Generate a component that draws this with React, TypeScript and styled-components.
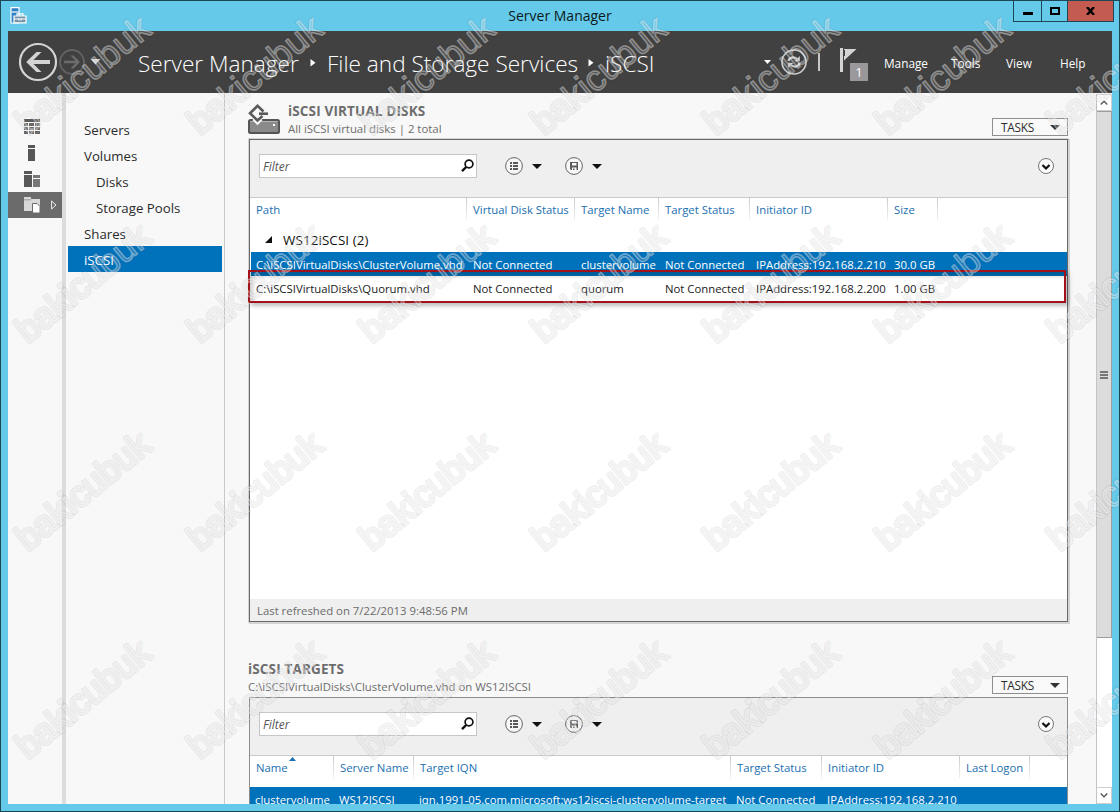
import React from "react";
import styled, { createGlobalStyle, css } from "styled-components";

const GlobalStyle = createGlobalStyle`
  * { box-sizing: border-box; }
  html, body { margin: 0; padding: 0; }
  body {
    width: 1120px;
    height: 812px;
    overflow: hidden;
    font-family: "Open Sans", "Noto Sans", sans-serif;
    font-size: 11.35px;
    color: #1e1e1e;
  }
  svg { display: block; flex: none; }
`;

const Window = styled.div`
  position: relative;
  width: 1120px;
  height: 812px;
  padding: 0 7px 7px;
  border: 1px solid #1d4656;
  background: #65c9ea;
  display: flex;
  flex-direction: column;
  overflow: hidden;
`;

const TitleBar = styled.header`
  height: 30px;
  flex: none;
  display: grid;
  grid-template-columns: 120px 1fr 120px;
  align-items: start;
`;

const AppIcon = styled.div`
  padding: 6px 0 0 1px;
`;

const WindowTitle = styled.div`
  text-align: center;
  font-size: 14px;
  line-height: 29px;
  color: #0c1a20;
`;

const CaptionButtons = styled.div`
  display: flex;
  justify-content: flex-end;
  margin: -1px -2px 0 0;
`;

const CaptionButton = styled.button<{ $width: number; $close?: boolean }>`
  width: ${(p) => p.$width}px;
  height: 22px;
  margin: 0 0 0 -1px;
  padding: 0;
  border: 1px solid #1d4656;
  background: ${(p) => (p.$close ? "#c45b50" : "transparent")};
  display: flex;
  align-items: center;
  justify-content: center;
`;

const Banner = styled.div`
  height: 62px;
  flex: none;
  background: #414141;
  color: #fff;
  display: flex;
  align-items: center;
  padding-left: 10px;
`;

const NavButtons = styled.div`
  width: 120px;
  display: flex;
  align-items: center;
`;

const Breadcrumb = styled.div`
  width: 626px;
  display: flex;
  align-items: center;
  font-size: 22.6px;
  font-weight: 300;
  line-height: 30px;
  white-space: nowrap;
  padding-top: 3px;
`;

const Crumb = styled.span<{ $width: number }>`
  width: ${(p) => p.$width}px;
`;

const BannerTools = styled.div`
  display: flex;
  align-items: center;
`;

const Divider = styled.i`
  width: 2px;
  height: 18px;
  margin: 0 20px 0 11px;
  background: #c6c6c6;
`;

const FlagButton = styled.div`
  position: relative;
  width: 44px;
  height: 36px;
  padding-top: 4px;
`;

const Badge = styled.span`
  position: absolute;
  left: 10px;
  top: 19px;
  width: 18px;
  height: 18px;
  background: #9a989b;
  font-size: 13px;
  line-height: 18px;
  text-align: center;
`;

const MenuItem = styled.span<{ $width: number }>`
  width: ${(p) => p.$width}px;
  font-size: 11.8px;
  line-height: 20px;
  padding-top: 1px;
`;

const Body = styled.div`
  flex: 1;
  min-height: 0;
  display: flex;
  background: #f8f8f8;
`;

const Rail = styled.nav`
  width: 58px;
  padding-top: 21px;
  border-right: 4px solid #dcdcdc;
`;

const RailItem = styled.div<{ $active?: boolean }>`
  height: 26px;
  display: flex;
  align-items: center;
  gap: 11px;
  padding-left: 16px;
  background: ${(p) => (p.$active ? "#6b6b6b" : "transparent")};
`;

const SideNav = styled.nav`
  width: 159px;
  padding: 23px 2px 0;
  border-right: 1px solid #c9c9c9;
`;

const SideItem = styled.div<{ $nested?: boolean; $active?: boolean }>`
  height: 26px;
  padding-left: ${(p) => (p.$nested ? 28 : 16)}px;
  line-height: 28px;
  font-size: 13.25px;
  color: ${(p) => (p.$active ? "#fff" : "#2b2b2b")};
  background: ${(p) => (p.$active ? "#0072bc" : "transparent")};
`;

const Content = styled.main`
  width: 871px;
  padding: 8px 0 0 23px;
  overflow: hidden;
`;

const SectionHead = styled.div<{ $gap?: number }>`
  width: 820px;
  height: 38px;
  margin-top: ${(p) => p.$gap || 0}px;
  display: flex;
  align-items: flex-start;
`;

const SectionIcon = styled.div`
  width: 40px;
  padding-top: 3px;
`;

const SectionTexts = styled.div`
  flex: 1;
  padding-top: 1px;
  color: #6d6d6d;
`;

const SectionTitle = styled.div`
  font-size: 13.5px;
  font-weight: 700;
  line-height: 18px;
  letter-spacing: 0.15px;
`;

const SectionSub = styled.div`
  font-size: 11.4px;
  line-height: 17px;
`;

const TasksButton = styled.button`
  width: 76px;
  height: 18px;
  margin: 17px 0 0;
  padding: 0 7px 0 8px;
  border: 1px solid #8f8f8f;
  background: #f9f9f9;
  display: flex;
  align-items: center;
  justify-content: space-between;
  font: 11.8px "Open Sans", sans-serif;
  letter-spacing: -0.2px;
  color: #2b2b2b;
`;

const Panel = styled.section<{ $height: number; $soft?: boolean }>`
  width: 819px;
  height: ${(p) => p.$height}px;
  margin-left: 1px;
  border: 1px solid ${(p) => (p.$soft ? "#8c8c8c" : "#696969")};
  background: #fff;
  display: flex;
  flex-direction: column;
  ${(p) =>
    !p.$soft &&
    css`
      box-shadow: 0 0 0 1px #d4d4d4, 1px 1px 0 1px #d4d4d4;
    `}
`;

const Toolbar = styled.div`
  height: 57px;
  flex: none;
  display: flex;
  align-items: flex-start;
  padding: 14px 13px 0 9px;
  background: #efefef;
`;

const FilterBox = styled.div`
  width: 218px;
  height: 24px;
  display: flex;
  align-items: center;
  justify-content: space-between;
  padding: 0 2px 0 3px;
  border: 1px solid #c6c6c6;
  background: #fff;
  font-style: italic;
  font-size: 12px;
  color: #555;
`;

const ToolButton = styled.div<{ $gap: number }>`
  height: 24px;
  width: 37px;
  margin-left: ${(p) => p.$gap}px;
  display: flex;
  align-items: center;
  justify-content: space-between;
`;

const ExpandButton = styled.div`
  height: 24px;
  margin-left: auto;
  display: flex;
  align-items: center;
`;

const HeadRow = styled.div<{ $height: number }>`
  height: ${(p) => p.$height}px;
  flex: none;
  display: flex;
  border-top: 1px solid #c9c9c9;
`;

const HeadCell = styled.div<{ $width: number }>`
  width: ${(p) => p.$width}px;
  height: 22px;
  padding: 0 0 0 6px;
  line-height: 23px;
  color: #1b6fb0;
  white-space: nowrap;
  border-right: 1px solid;
  border-image: linear-gradient(#c9c9c9, #f3f3f3) 1;
`;

const SortMark = styled.svg`
  position: absolute;
  left: 288px;
  top: 756px;
`;

const GroupRow = styled.div`
  height: 28px;
  display: flex;
  align-items: center;
  gap: 11px;
  padding: 3px 0 0 15px;
  font-size: 13.4px;
  letter-spacing: 0.1px;
  color: #111;
`;

const Row = styled.div<{ $active?: boolean; $shift?: number }>`
  height: 24px;
  flex: none;
  display: flex;
  align-items: center;
  margin-left: ${(p) => p.$shift || 0}px;
  line-height: 24px;
  color: ${(p) => (p.$active ? "#fff" : "#1a1a1a")};
  background: ${(p) => (p.$active ? "#0072bc" : "transparent")};
`;

const Cell = styled.div<{ $width: number }>`
  width: ${(p) => p.$width}px;
  padding: 2px 0 0 5px;
  white-space: nowrap;
`;

const PanelFooter = styled.div`
  height: 22px;
  margin-top: auto;
  padding-left: 7px;
  line-height: 23px;
  background: #efefef;
  color: #6b6b6b;
`;

const Highlight = styled.div`
  position: absolute;
  left: 247px;
  top: 269px;
  width: 818px;
  height: 33px;
  border: 2px solid #a3121a;
  box-shadow: 3px 3px 4px rgba(0, 0, 0, 0.25), inset 3px 4px 4px rgba(0, 0, 0, 0.2);
`;

const ScrollBar = styled.div`
  width: 16px;
  margin-top: 1px;
  border-left: 1px solid #c4c4c4;
  background: #fff;
  display: flex;
  flex-direction: column;
`;

const ScrollArrow = styled.div<{ $bottom?: boolean }>`
  height: 17px;
  flex: none;
  display: flex;
  align-items: center;
  justify-content: center;
  border: 1px solid #cfcfcf;
  border-left: 0;
  margin-top: ${(p) => (p.$bottom ? "auto" : 0)};
`;

const ScrollThumb = styled.div`
  height: 527px;
  display: flex;
  align-items: center;
  justify-content: center;
  border: 1px solid #9d9d9d;
  border-left: 0;
  background: #dcdcdc;
`;

const WatermarkLayer = styled.svg`
  position: absolute;
  left: -1px;
  top: -1px;
  pointer-events: none;
  font-family: "Liberation Sans", Arial, sans-serif;
  font-size: 36px;
`;

const Caret = ({ color = "#111" }: { color?: string }) => (
  <svg width="10" height="5" viewBox="0 0 10 5">
    <path d="M0 0H10L5 5Z" fill={color} />
  </svg>
);

const CrumbArrow = () => (
  <svg width="28" height="10" viewBox="0 0 28 10">
    <path d="M11.500 0L16.500 3.700L11.500 7.500Z" fill="#fff" />
  </svg>
);

const ServerManagerIcon = () => (
  <svg width="18" height="17" viewBox="0 0 18 17">
    <path d="M2 .7H10V16H2Z" fill="#2f7fc4" stroke="#fff" strokeWidth="1.200" />
    <path d="M2.500 5H9.500" stroke="#fff" strokeWidth="1.200" />
    <path d="M5 9H17V15.800H5Z" fill="#7393a8" stroke="#fff" strokeWidth="1.200" />
    <path d="M8 9V6.800H14V9M5 12H9.500M12.500 12H17M10 11V13.500M12 11V13.500" fill="none" stroke="#fff" strokeWidth="1.200" />
  </svg>
);

const BackIcon = () => (
  <svg width="40" height="40" viewBox="0 0 40 40">
    <circle cx="20" cy="20" r="18" fill="none" stroke="#d4d4d4" strokeWidth="2.200" />
    <path d="M32 18H15.500L23.500 10H18.500L8.200 20L18.500 30H23.500L15.500 22H32Z" fill="#d4d4d4" />
  </svg>
);

const ForwardIcon = () => (
  <svg width="28" height="28" viewBox="0 0 28 28">
    <circle cx="14" cy="14" r="12" fill="none" stroke="#636363" strokeWidth="1.800" />
    <path d="M6 12.700H17.500L12.500 7.500H15.500L22 14L15.500 20.500H12.500L17.500 15.300H6Z" fill="#6c6c6c" />
  </svg>
);

const RefreshIcon = () => (
  <svg width="26" height="26" viewBox="0 0 26 26" fill="none" stroke="#d2d2d2">
    <circle cx="13" cy="13" r="12" strokeWidth="1.600" />
    <path d="M7.500 12C8 8.800 12.500 7 16 10M18.500 14C18 17.200 13.500 19 10 16" strokeWidth="2.200" />
    <path d="M18.800 7V12.200H13.500ZM7.200 19V13.800H12.500Z" fill="#d2d2d2" stroke="none" />
  </svg>
);

const FlagIcon = () => (
  <svg width="17" height="24" viewBox="0 0 17 24">
    <path d="M0 0H3V24H0Z" fill="#d4d4d4" />
    <path d="M4 1H16.500L4 12.500Z" fill="#d4d4d4" />
    <path d="M4.500 2V8" stroke="#414141" strokeWidth="1" />
  </svg>
);

const DashboardIcon = () => (
  <svg width="16" height="16" viewBox="0 0 16 16" fill="#6a6a6a">
    <path d="M0 0H16V3H0Z" fill="#5c5c5c" />
    <path d="M0 4H4V7H0ZM5 4H10V7H5ZM11 4H16V7H11ZM0 8H4V11H0ZM5 8H10V11H5ZM11 8H16V11H11ZM0 12H4V15H0ZM5 12H10V15H5ZM11 12H16V15H11Z" />
  </svg>
);

const LocalServerIcon = () => (
  <svg width="16" height="16" viewBox="0 0 16 16" fill="#575757">
    <path d="M4 0H11V3H4ZM4 4H11V16H4Z" />
  </svg>
);

const AllServersIcon = () => (
  <svg width="16" height="16" viewBox="0 0 16 16">
    <path d="M0 0H8V3H0ZM0 4H8V16H0Z" fill="#575757" />
    <path d="M9 4H16V7H9ZM9 8H16V16H9Z" fill="#777" />
  </svg>
);

const FilesIcon = () => (
  <svg width="16" height="16" viewBox="0 0 16 16">
    <path d="M0 0H7V2H16V14H0Z" fill="#d8d8d8" />
    <path d="M0 2.800H7" stroke="#9a9a9a" />
    <path d="M8.500 6.500H13L16 9.500V16H8.500Z" fill="#fff" stroke="#6b6b6b" />
  </svg>
);

const VirtualDiskIcon = () => (
  <svg width="32" height="31" viewBox="0 0 32 31">
    <rect x="1" y="16" width="30" height="13" rx="1.500" fill="#8a8a8a" stroke="#555" strokeWidth="2" />
    <path d="M2.500 17.500H29.500" stroke="#b5b5b5" />
    <path d="M25 20H27V22H25Z" fill="#fff" />
    <path d="M6 14.500L9.500 18L13 14.500" fill="none" stroke="#f8f8f8" strokeWidth="4.500" />
    <path d="M15.500 7.500L9.500 1.800L2 9.300L9.500 16.500L14.500 12" fill="none" stroke="#5a5a5a" strokeWidth="2.600" />
    <path d="M11 9.700H20" stroke="#5a5a5a" strokeWidth="2.600" />
  </svg>
);

const SearchIcon = () => (
  <svg width="13" height="14" viewBox="0 0 13 14" fill="none" stroke="#111">
    <circle cx="8" cy="5" r="3.900" strokeWidth="1.700" />
    <path d="M5.200 8L1 12.200" strokeWidth="2.400" />
  </svg>
);

const ListIcon = () => (
  <svg width="18" height="18" viewBox="0 0 18 18">
    <circle cx="9" cy="9" r="8.400" fill="#f7f7f7" stroke="#666" />
    <path d="M5 5H7V7H5ZM8 5H13V7H8ZM5 8H7V10H5ZM8 8H13V10H8ZM5 11H7V13H5ZM8 11H13V13H8Z" fill="#5a5a5a" />
  </svg>
);

const SaveIcon = () => (
  <svg width="18" height="18" viewBox="0 0 18 18">
    <circle cx="9" cy="9" r="8.400" fill="#f7f7f7" stroke="#666" />
    <path d="M5 5H13V13H11.500V10.500H7V13H6L5 12ZM7 6V8.500H11.500V6Z" fill="#5a5a5a" fillRule="evenodd" />
    <path d="M8 11.500H9.500V13H8Z" fill="#5a5a5a" />
  </svg>
);

const ExpandIcon = () => (
  <svg width="16" height="16" viewBox="0 0 16 16">
    <circle cx="8" cy="8" r="7.500" fill="#fbfbfb" stroke="#777" />
    <path d="M4.500 7L8 10.500L11.500 7" fill="none" stroke="#111" strokeWidth="2.200" />
  </svg>
);

const FilterToolbar = () => (
  <Toolbar>
    <FilterBox>
      Filter
      <SearchIcon />
    </FilterBox>
    <ToolButton $gap={28}>
      <ListIcon />
      <Caret />
    </ToolButton>
    <ToolButton $gap={23}>
      <SaveIcon />
      <Caret />
    </ToolButton>
    <ExpandButton>
      <ExpandIcon />
    </ExpandButton>
  </Toolbar>
);

const diskColumns = [
  { label: "Path", width: 217 },
  { label: "Virtual Disk Status", width: 108 },
  { label: "Target Name", width: 84 },
  { label: "Target Status", width: 91 },
  { label: "Initiator ID", width: 138 },
  { label: "Size", width: 50 },
];

const diskRows = [
  ["C:\\iSCSIVirtualDisks\\ClusterVolume.vhd", "Not Connected", "clustervolume", "Not Connected", "IPAddress:192.168.2.210", "30.0 GB"],
  ["C:\\iSCSIVirtualDisks\\Quorum.vhd", "Not Connected", "quorum", "Not Connected", "IPAddress:192.168.2.200", "1.00 GB"],
];

const targetColumns = [
  { label: "Name", width: 84 },
  { label: "Server Name", width: 80 },
  { label: "Target IQN", width: 317 },
  { label: "Target Status", width: 91 },
  { label: "Initiator ID", width: 138 },
  { label: "Last Logon", width: 70 },
];

const targetRow = [
  "clustervolume",
  "WS12ISCSI",
  "iqn.1991-05.com.microsoft:ws12iscsi-clustervolume-target",
  "Not Connected",
  "IPAddress:192.168.2.210",
  "",
];

const sideItems = [
  { label: "Servers" },
  { label: "Volumes" },
  { label: "Disks", nested: true },
  { label: "Storage Pools", nested: true },
  { label: "Shares" },
  { label: "iSCSI", active: true },
];

const Watermark = () => {
  const marks: React.ReactNode[] = [];
  for (let r = 0; r < 4; r++) {
    for (let c = 0; c < 7; c++) {
      marks.push(
        <text key={`${r}-${c}`} transform={`translate(${28 + c * 172} ${136 + r * 208}) rotate(-39.5)`}>
          bakicubuk
        </text>
      );
    }
  }
  return (
    <WatermarkLayer width="1120" height="812" viewBox="0 0 1120 812" strokeLinejoin="round">
      <g fill="none" stroke="#000" strokeOpacity="0.07" strokeWidth="3.800">
        {marks}
      </g>
      <g fill="#fff" fillOpacity="0.13" stroke="#fff" strokeOpacity="0.38" strokeWidth="1.600">
        {marks}
      </g>
    </WatermarkLayer>
  );
};

export default function App() {
  return (
    <>
      <GlobalStyle />
      <Window>
        <TitleBar>
          <AppIcon>
            <ServerManagerIcon />
          </AppIcon>
          <WindowTitle>Server Manager</WindowTitle>
          <CaptionButtons>
            <CaptionButton $width={29}>
              <svg width="10" height="10" viewBox="0 0 10 10">
                <path d="M0 6H10V9H0Z" fill="#000" />
              </svg>
            </CaptionButton>
            <CaptionButton $width={27}>
              <svg width="10" height="8" viewBox="0 0 10 8">
                <path d="M1 1H9V7H1Z" fill="none" stroke="#000" strokeWidth="2" />
              </svg>
            </CaptionButton>
            <CaptionButton $width={47} $close>
              <svg width="9" height="8" viewBox="0 0 9 8">
                <path d="M1 0L8 8M8 0L1 8" stroke="#000" strokeWidth="2.400" />
              </svg>
            </CaptionButton>
          </CaptionButtons>
        </TitleBar>

        <Banner>
          <NavButtons>
            <BackIcon />
            <ForwardIcon />
            <svg width="24" height="6" viewBox="0 0 24 6">
              <path d="M4.500 0H14.500L9.500 5.500Z" fill="#d4d4d4" />
            </svg>
          </NavButtons>
          <Breadcrumb>
            <Crumb $width={161}>Server Manager</Crumb>
            <CrumbArrow />
            <Crumb $width={250}>File and Storage Services</Crumb>
            <CrumbArrow />
            <Crumb $width={60}>iSCSI</Crumb>
          </Breadcrumb>
          <BannerTools>
            <svg width="17" height="4" viewBox="0 0 17 4">
              <path d="M0 0H7L3.500 4Z" fill="#fff" />
            </svg>
            <RefreshIcon />
            <Divider />
            <FlagButton>
              <FlagIcon />
              <Badge>1</Badge>
            </FlagButton>
            <MenuItem $width={67}>Manage</MenuItem>
            <MenuItem $width={55}>Tools</MenuItem>
            <MenuItem $width={54}>View</MenuItem>
            <MenuItem $width={40}>Help</MenuItem>
          </BannerTools>
        </Banner>

        <Body>
          <Rail>
            <RailItem><DashboardIcon /></RailItem>
            <RailItem><LocalServerIcon /></RailItem>
            <RailItem><AllServersIcon /></RailItem>
            <RailItem $active>
              <FilesIcon />
              <svg width="6" height="10" viewBox="0 0 6 10">
                <path d="M.6 1L5 5L.6 9Z" fill="none" stroke="#eee" />
              </svg>
            </RailItem>
          </Rail>

          <SideNav>
            {sideItems.map((item) => (
              <SideItem key={item.label} $nested={item.nested} $active={item.active}>
                {item.label}
              </SideItem>
            ))}
          </SideNav>

          <Content>
            <SectionHead>
              <SectionIcon>
                <VirtualDiskIcon />
              </SectionIcon>
              <SectionTexts>
                <SectionTitle>iSCSI VIRTUAL DISKS</SectionTitle>
                <SectionSub>All iSCSI virtual disks | 2 total</SectionSub>
              </SectionTexts>
              <TasksButton>
                TASKS
                <Caret color="#333" />
              </TasksButton>
            </SectionHead>
            <Panel $height={483}>
              <FilterToolbar />
              <HeadRow $height={27}>
                {diskColumns.map((col) => (
                  <HeadCell key={col.label} $width={col.width}>{col.label}</HeadCell>
                ))}
              </HeadRow>
              <GroupRow>
                <svg width="7" height="7" viewBox="0 0 7 7">
                  <path d="M7 0V7H0Z" fill="#111" />
                </svg>
                WS12iSCSI (2)
              </GroupRow>
              {diskRows.map((row, r) => (
                <Row key={row[0]} $active={r === 0} $shift={1}>
                  {row.map((value, i) => (
                    <Cell key={i} $width={diskColumns[i].width}>{value}</Cell>
                  ))}
                </Row>
              ))}
              <PanelFooter>Last refreshed on 7/22/2013 9:48:56 PM</PanelFooter>
            </Panel>

            <SectionHead $gap={37}>
              <SectionTexts>
                <SectionTitle>iSCSI TARGETS</SectionTitle>
                <SectionSub>C:\iSCSIVirtualDisks\ClusterVolume.vhd on WS12ISCSI</SectionSub>
              </SectionTexts>
              <TasksButton>
                TASKS
                <Caret color="#333" />
              </TasksButton>
            </SectionHead>
            <Panel $height={160} $soft>
              <FilterToolbar />
              <HeadRow $height={32}>
                {targetColumns.map((col) => (
                  <HeadCell key={col.label} $width={col.width}>{col.label}</HeadCell>
                ))}
              </HeadRow>
              <Row $active>
                {targetRow.map((value, i) => (
                  <Cell key={i} $width={targetColumns[i].width}>{value}</Cell>
                ))}
              </Row>
            </Panel>
          </Content>

          <ScrollBar>
            <ScrollArrow>
              <svg width="8" height="5" viewBox="0 0 8 5">
                <path d="M.7 4.500L4 1.200L7.300 4.500" fill="none" stroke="#555" strokeWidth="1.300" />
              </svg>
            </ScrollArrow>
            <ScrollThumb>
              <svg width="8" height="8" viewBox="0 0 8 8">
                <path d="M0 1H8M0 4H8M0 7H8" stroke="#555" strokeWidth="1.600" />
              </svg>
            </ScrollThumb>
            <ScrollArrow $bottom>
              <svg width="8" height="5" viewBox="0 0 8 5">
                <path d="M.7 .5L4 3.800L7.300 .5" fill="none" stroke="#555" strokeWidth="1.300" />
              </svg>
            </ScrollArrow>
          </ScrollBar>
        </Body>

        <SortMark width="7" height="4" viewBox="0 0 7 4">
          <path d="M0 4L3.500 0L7 4Z" fill="#1b6fb0" />
        </SortMark>
        <Highlight />
        <Watermark />
      </Window>
    </>
  );
}
